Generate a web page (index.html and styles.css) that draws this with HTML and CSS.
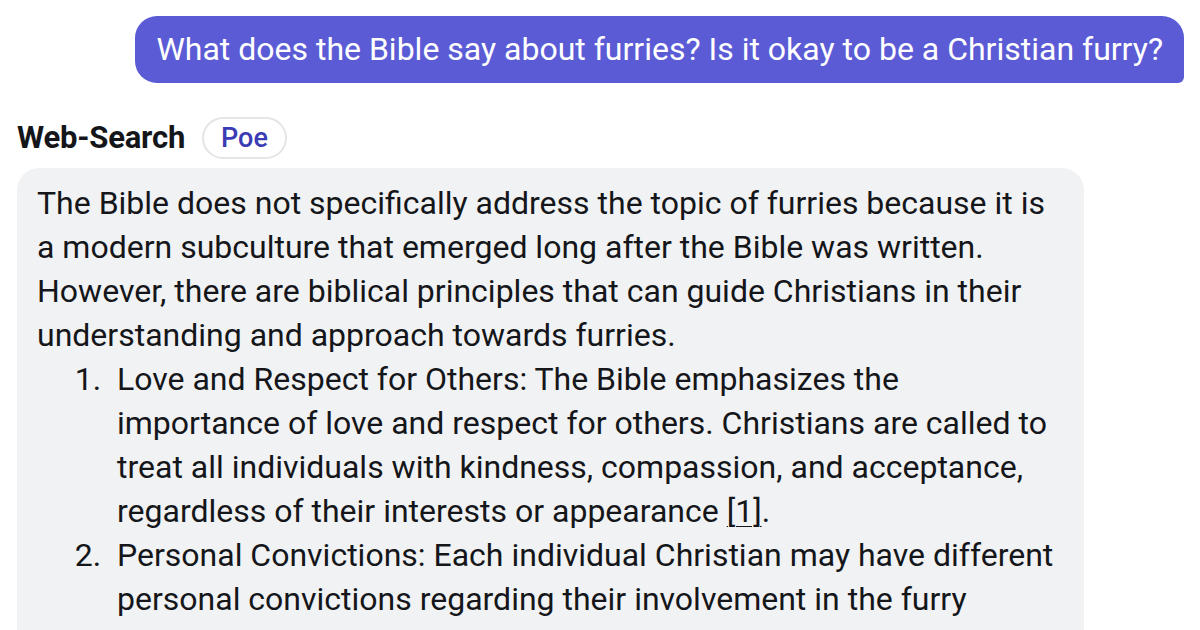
FILE: index.html
```html
<!DOCTYPE html>
<html>
<head>
<meta charset="utf-8">
<link rel="stylesheet" href="styles.css">
</head>
<body>
<div class="chat">
  <div class="user-row">
    <div class="user-bubble">What does the Bible say about furries? Is it okay to be a Christian furry?</div>
  </div>
  <div class="bot-header">
    <span class="bot-name">Web-Search</span>
    <span class="bot-tag">Poe</span>
  </div>
  <div class="bot-bubble">
    <p>The Bible does not specifically address the topic of furries because it is a modern subculture that emerged long after the Bible was written. However, there are biblical principles that can guide Christians in their understanding and approach towards furries.</p>
    <ol>
      <li>Love and Respect for Others: The Bible emphasizes the importance of love and respect for others. Christians are called to treat all individuals with kindness, compassion, and acceptance, regardless of their interests or appearance <a class="cite">[1]</a>.</li>
      <li>Personal Convictions: Each individual Christian may have different personal convictions regarding their involvement in the furry fandom. Some may feel comfortable participating, while others may not.</li>
    </ol>
  </div>
</div>
</body>
</html>
```

FILE: styles.css
```css
html, body {
  margin: 0;
  padding: 0;
  background: #ffffff;
}
body {
  font-family: Roboto, "Noto Sans", sans-serif;
  color: #14161a;
  font-size: 32px;
  line-height: 44px;
}
.chat {
  display: flex;
  flex-direction: column;
  padding: 16px 16px 0 17px;
}
.user-row {
  display: flex;
  justify-content: flex-end;
}
.user-bubble {
  background: #5b5bd6;
  color: #ffffff;
  padding: 11px 21px 12px 21px;
  border-radius: 22px 22px 6px 22px;
}
.bot-header {
  display: flex;
  align-items: center;
  gap: 17px;
  margin-top: 34px;
  height: 42px;
}
.bot-name {
  font-weight: 700;
  font-size: 31px;
  letter-spacing: -0.2px;
}
.bot-tag {
  display: inline-flex;
  align-items: center;
  height: 38px;
  padding: 0 17px;
  border: 2px solid #e4e5e8;
  border-radius: 21px;
  color: #3b3bb3;
  font-weight: 500;
  font-size: 27px;
}
.bot-bubble {
  margin-top: 9px;
  width: 1027px;
  background: #f1f2f3;
  border-radius: 22px;
  padding: 13px 20px 20px 20px;
}
.bot-bubble p {
  margin: 0;
}
.bot-bubble ol {
  margin: 0;
  padding-left: 80px;
}
.bot-bubble li::marker {
  content: counter(list-item) ".\00a0\00a0";
}
.cite {
  color: inherit;
  text-decoration: underline;
  text-decoration-thickness: 1px;
  text-underline-offset: 4px;
}
```
